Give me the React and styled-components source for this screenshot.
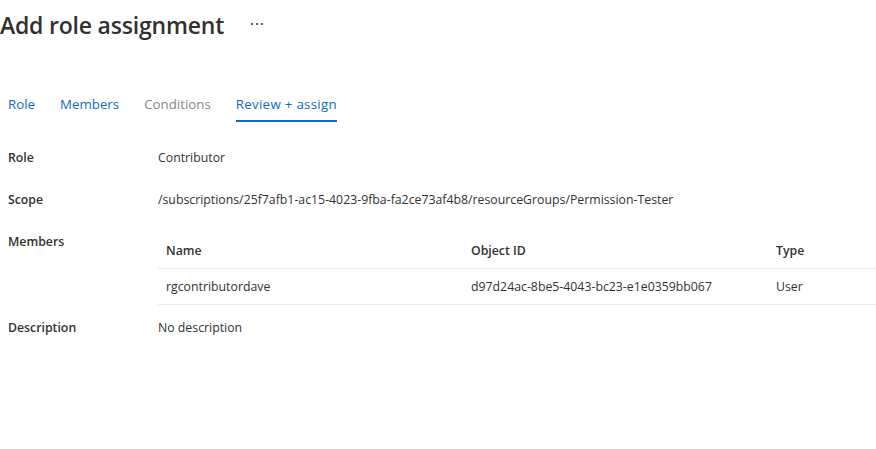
import React from 'react';
import styled, { createGlobalStyle } from 'styled-components';

const GlobalStyle = createGlobalStyle`
  html, body {
    margin: 0;
    padding: 0;
    background: #fff;
  }
  body {
    font-family: 'Open Sans', 'Noto Sans', sans-serif;
    color: #323130;
    -webkit-font-smoothing: antialiased;
  }
`;

const tabs = [
  { label: 'Role' },
  { label: 'Members' },
  { label: 'Conditions', disabled: true },
  { label: 'Review + assign', active: true },
];

const members = [
  {
    name: 'rgcontributordave',
    id: 'd97d24ac-8be5-4043-bc23-e1e0359bb067',
    type: 'User',
  },
];

function App() {
  return (
    <Page>
      <GlobalStyle />
      <Header>
        <Title>Add role assignment</Title>
        <MoreButton aria-label='More'>
          <Dot />
          <Dot />
          <Dot />
        </MoreButton>
      </Header>

      <TabBar>
        {tabs.map((tab) => (
          <Tab key={tab.label} $active={tab.active} $disabled={tab.disabled}>
            {tab.label}
          </Tab>
        ))}
      </TabBar>

      <Details>
        <Row>
          <Label>Role</Label>
          <Value>Contributor</Value>
        </Row>
        <Row>
          <Label>Scope</Label>
          <Value>
            /subscriptions/25f7afb1-ac15-4023-9fba-fa2ce73af4b8/resourceGroups/Permission-Tester
          </Value>
        </Row>
        <Row $tight>
          <Label>Members</Label>
          <Table>
            <HeadCell>Name</HeadCell>
            <HeadCell>Object ID</HeadCell>
            <HeadCell>Type</HeadCell>
            {members.map((m) => (
              <React.Fragment key={m.id}>
                <Cell>{m.name}</Cell>
                <Cell>{m.id}</Cell>
                <Cell>{m.type}</Cell>
              </React.Fragment>
            ))}
          </Table>
        </Row>
        <Row>
          <Label>Description</Label>
          <Value>No description</Value>
        </Row>
      </Details>
    </Page>
  );
}

const Page = styled.div`
  width: 876px;
  min-height: 449px;
`;

const Header = styled.div`
  display: flex;
  align-items: center;
  height: 50px;
`;

const Title = styled.h1`
  margin: 0;
  font-size: 23px;
  font-weight: 600;
  line-height: 32px;
  color: #323130;
  letter-spacing: -0.2px;
`;

const MoreButton = styled.div`
  display: flex;
  align-items: center;
  gap: 3px;
  margin-left: 27px;
  margin-top: -2px;
`;

const Dot = styled.span`
  width: 2px;
  height: 2px;
  background: #605e5c;
`;

const TabBar = styled.div`
  display: flex;
  gap: 25px;
  padding-left: 8px;
  margin-top: 36px;
`;

const Tab = styled.div`
  font-size: 13.3px;
  line-height: 20px;
  padding: 8px 0 6px;
  color: ${(p) => (p.$disabled ? '#8a8886' : '#0f6cbd')};
  border-bottom: 2px solid ${(p) => (p.$active ? '#0f6cbd' : 'transparent')};
  letter-spacing: ${(p) => (p.$active ? '0.3px' : '0')};
`;

const Details = styled.div`
  display: flex;
  flex-direction: column;
  margin-top: 26px;
`;

const Row = styled.div`
  display: flex;
  align-items: flex-start;
  padding-bottom: ${(p) => (p.$tight ? '13px' : '22px')};
`;

const Label = styled.div`
  width: 158px;
  flex: none;
  padding-left: 8px;
  box-sizing: border-box;
  font-size: 12.3px;
  line-height: 20px;
  font-weight: 600;
`;

const Value = styled.div`
  font-size: 12.3px;
  line-height: 20px;
  white-space: nowrap;
`;

const Table = styled.div`
  flex: 1;
  display: grid;
  grid-template-columns: 305px 305px 1fr;
  margin-top: 1px;
`;

const HeadCell = styled.div`
  height: 35px;
  display: flex;
  align-items: center;
  padding-left: 8px;
  font-size: 12.3px;
  font-weight: 600;
  border-bottom: 1px solid #edebe9;
`;

const Cell = styled(HeadCell)`
  font-weight: 400;
`;

export default App;
